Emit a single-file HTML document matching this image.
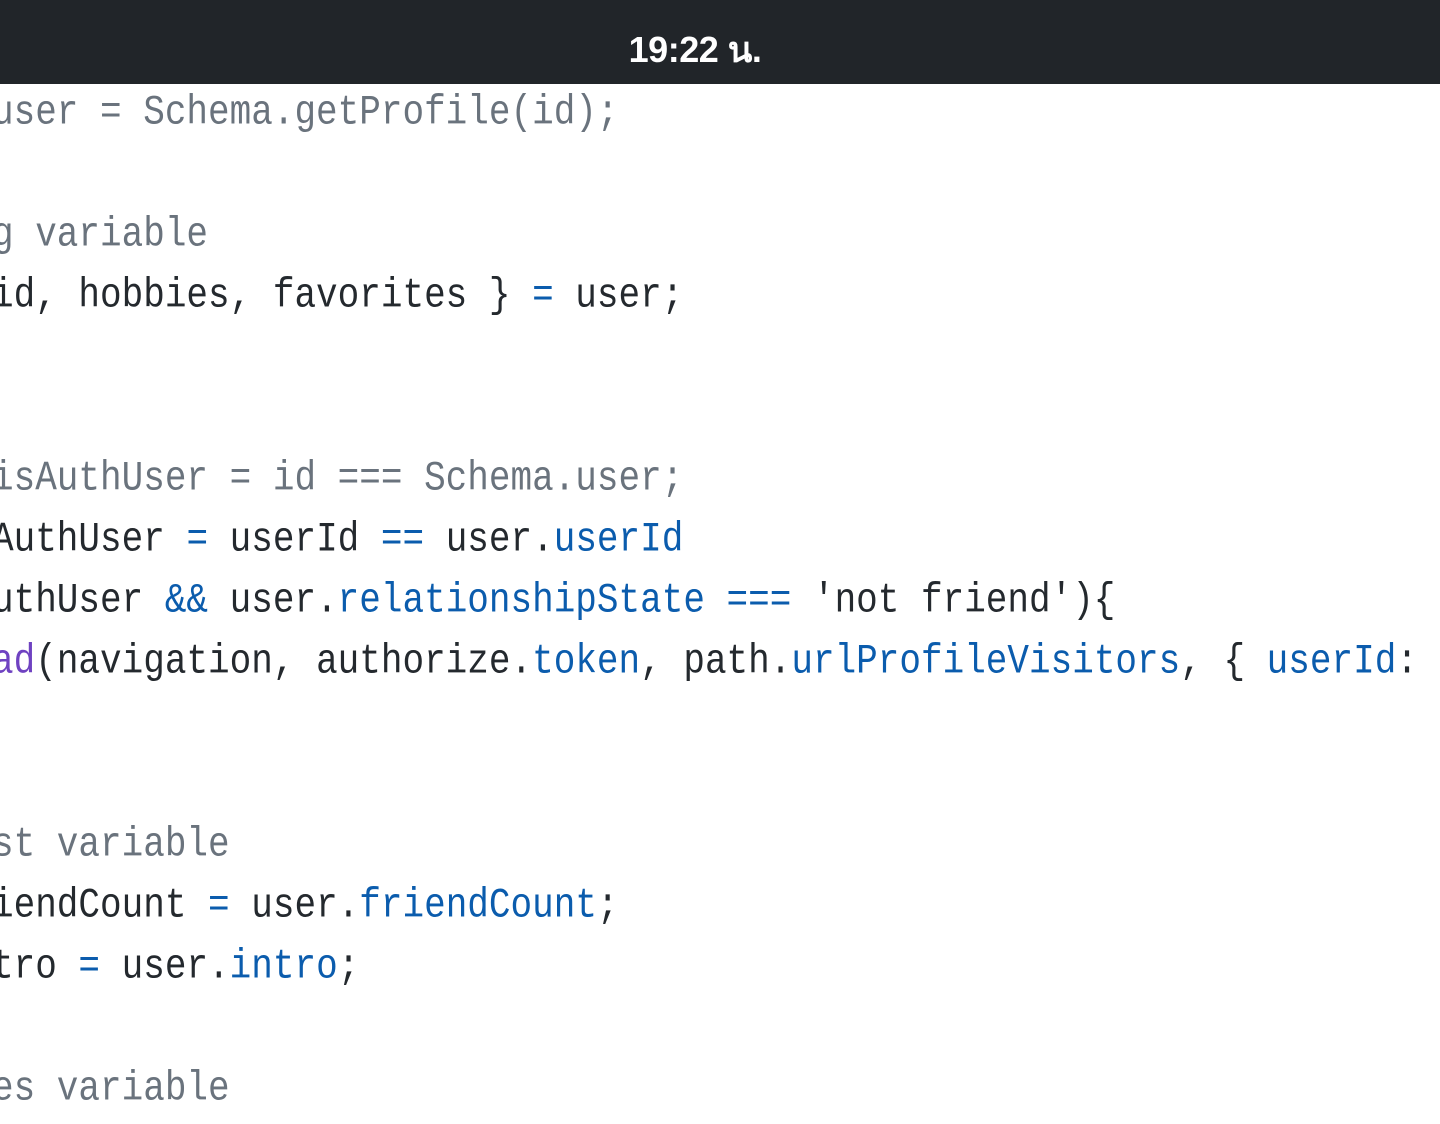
<!DOCTYPE html>
<html><head><meta charset="utf-8"><style>
html,body{margin:0;padding:0;width:1440px;height:1080px;overflow:hidden;background:#fff;}
.bar{position:absolute;left:0;top:0;width:1440px;height:84px;background:#212529;}
.time{position:absolute;left:0;width:1390px;text-align:center;top:21px;color:#fff;font:bold 36px "Liberation Sans","Noto Sans CJK SC",sans-serif;letter-spacing:-0.5px;}
.ln{position:absolute;left:-8px;height:61px;line-height:61px;font-family:"Liberation Mono",monospace;font-size:36px;white-space:pre;color:#24292e;transform:scaleY(1.15);transform-origin:0 50%;}
.g{color:#6a737d}.b{color:#0b5cad}.p{color:#6f42c1}
</style></head><body>
<div class="bar"><div class="time">19:22 น.</div></div>
<div class="ln g" style="top:82px">user = Schema.getProfile(id);</div>
<div class="ln g" style="top:204px">g variable</div>
<div class="ln" style="top:265px">id, hobbies, favorites } <span class="b">=</span> user;</div>
<div class="ln g" style="top:448px">isAuthUser = id === Schema.user;</div>
<div class="ln" style="top:509px">AuthUser <span class="b">=</span> userId <span class="b">==</span> user.<span class="b">userId</span></div>
<div class="ln" style="top:570px">uthUser <span class="b">&amp;&amp;</span> user.<span class="b">relationshipState</span> <span class="b">===</span> 'not friend'){</div>
<div class="ln" style="top:631px"><span class="p">ad</span>(navigation, authorize.<span class="b">token</span>, path.<span class="b">urlProfileVisitors</span>, { <span class="b">userId</span>:</div>
<div class="ln g" style="top:814px">st variable</div>
<div class="ln" style="top:875px">iendCount <span class="b">=</span> user.<span class="b">friendCount</span>;</div>
<div class="ln" style="top:936px">tro <span class="b">=</span> user.<span class="b">intro</span>;</div>
<div class="ln g" style="top:1058px">es variable</div>
</body></html>
